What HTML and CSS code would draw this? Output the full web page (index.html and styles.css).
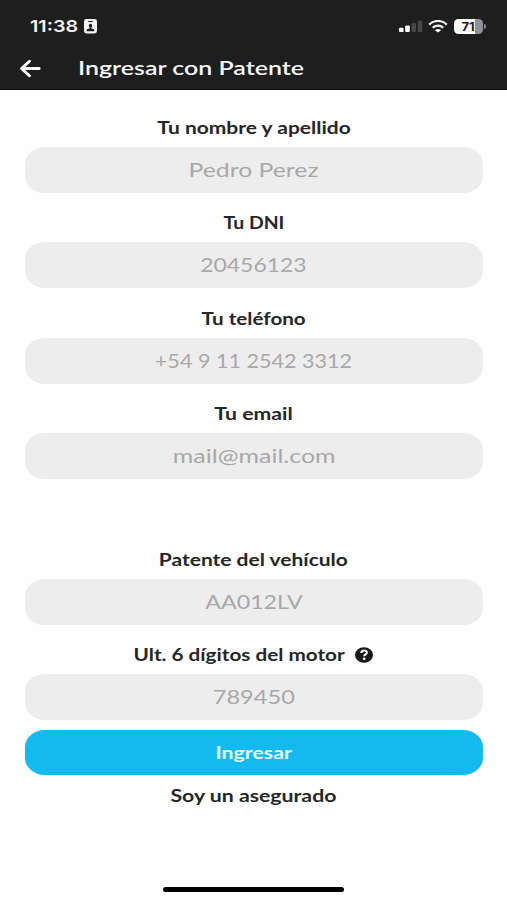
FILE: index.html
```html
<!DOCTYPE html>
<html lang="es">
<head>
<meta charset="utf-8">
<title>Ingresar con Patente</title>
<link rel="stylesheet" href="styles.css">
</head>
<body>
<header class="header">
  <div class="status">
    <span class="time wide">11:38</span>
    <svg class="id-badge" width="13" height="15" viewBox="0 0 13 15"><rect width="13" height="14.5" rx="2.4" fill="#f4f4f4"/><path d="M4.300 2.500h4.400" stroke="#1e1e1e" stroke-width="1.100"/><path d="M2.800 12.200v-1c0-1.200 1.300-1.400 2.900-1.600V8.300h1.600v1.300c1.600.2 2.900.4 2.900 1.600v1z" fill="#1e1e1e"/><ellipse cx="6.500" cy="6.700" rx="1.700" ry="2" fill="#1e1e1e"/></svg>
    <svg class="signal" width="24" height="13" viewBox="0 0 24 13"><rect x="0" y="7.800" width="4.600" height="4.200" rx="1" fill="#fff"/><rect x="6.200" y="5.500" width="4.600" height="6.500" rx="1" fill="#fff"/><rect x="12.600" y="3" width="4.400" height="9" rx="1" fill="#484848"/><rect x="18.800" y=".7" width="4.400" height="11.300" rx="1" fill="#484848"/></svg>
    <svg class="wifi" width="20" height="13" viewBox="0 0 20 13"><path d="M1.200 4.600C6-.2 14-.2 18.800 4.600M4.700 7.700c3-2.700 7.600-2.700 10.600 0" fill="none" stroke="#f6f6f6" stroke-width="2.200"/><path d="M10 12.600 6.900 10.200c1.700-1.500 4.500-1.500 6.200 0z" fill="#f6f6f6"/></svg>
    <div class="battery"><span class="level"><span class="percent wide">71</span></span><i class="cap"></i></div>
  </div>
  <div class="bar">
    <svg class="back" width="23" height="19" viewBox="0 0 23 19"><path d="M10.500 2.200 2.500 9.500l8 7.300M3 9.500h17.200" fill="none" stroke="#fff" stroke-width="2.900" stroke-linecap="round" stroke-linejoin="round"/></svg>
    <h1 class="title wide">Ingresar con Patente</h1>
  </div>
</header>
<main class="form">
  <div class="field name"><div class="label"><span class="wide">Tu nombre y apellido</span></div><div class="input"><span class="wide">Pedro Perez</span></div></div>
  <div class="field dni"><div class="label"><span class="wide">Tu DNI</span></div><div class="input"><span class="wide">20456123</span></div></div>
  <div class="field phone"><div class="label"><span class="wide">Tu teléfono</span></div><div class="input"><span class="wide">+54 9 11 2542 3312</span></div></div>
  <div class="field email"><div class="label"><span class="wide">Tu email</span></div><div class="input"><span class="wide">mail@mail.com</span></div></div>
  <div class="field vehicle"><div class="label"><span class="wide">Patente del vehículo</span></div><div class="input"><span class="wide">AA012LV</span></div></div>
  <div class="field motor"><div class="label"><span class="wide">Ult. 6 dígitos del motor</span><svg class="help" width="18" height="16" viewBox="0 0 18 16"><ellipse cx="9" cy="8" rx="9" ry="7.800" fill="#181818"/><path d="M6.200 6c.3-3.300 6-3.200 5.700-.3C11.700 7.400 9.200 7.300 9.200 9.300" fill="none" stroke="#fff" stroke-width="2.100"/><ellipse cx="9.200" cy="11.800" rx="1.400" ry="1.200" fill="#fff"/></svg></div><div class="input"><span class="wide">789450</span></div></div>
  <button class="submit"><span class="wide">Ingresar</span></button>
  <a class="link"><span class="wide">Soy un asegurado</span></a>
</main>
<div class="home"></div>
</body>
</html>
```
FILE: styles.css
```css
* { box-sizing: border-box; }
body { margin: 0; height: 900px; display: flex; flex-direction: column; background: #fefefe; color: #262626; font-family: Lato, sans-serif; overflow: hidden; }

/* Extended lettering */
.wide { display: inline-block; white-space: nowrap; transform: scaleX(var(--stretch, 1.27)); transform-origin: center; }

.header { height: 90px; background: #1e1e1e; color: #f5f5f5; border-bottom: 1px solid #111; }
.status { height: 50px; padding: 2px 21px 0 29.500px; display: flex; align-items: center; }
.time { --stretch: 1.23; width: 42px; font: 600 16px/20px Inter, sans-serif; transform-origin: left; margin-right: 12.500px; }
.signal { margin-left: auto; }
.wifi { margin-left: 5px; }
.battery { display: flex; align-items: center; margin-left: 6px; }
.level { width: 29px; height: 15px; border-radius: 4.500px; background: linear-gradient(90deg, #fff 21px, #929292 21px); color: #1e1e1e; font: 700 12px/15px Inter, sans-serif; text-align: center; }
.percent { --stretch: 1.1; }
.cap { width: 2px; height: 5px; margin-left: 1px; border-radius: 0 2px 2px 0; background: #888; }
.bar { height: 36px; padding-left: 18.500px; display: flex; align-items: center; }
.title { --stretch: 1.278; margin: 0 0 0 36.500px; font-size: 19.500px; line-height: 24px; font-weight: 600; transform-origin: left; }

.form { padding: 23px 24.500px 0 25px; flex: 1; }
.field { height: 95.400px; }
.label { height: 34px; padding-top: 4px; display: flex; justify-content: center; font-size: 16.500px; line-height: 22px; font-weight: 700; }
.input { height: 46px; padding-bottom: 2px; display: flex; align-items: center; justify-content: center; border-radius: 20px / 17px; background: #ededed; color: #a8a8a8; font-size: 20px; }

.name .label { --stretch: 1.272; }
.name .input { --stretch: 1.238; }
.dni .label { --stretch: 1.175; }
.dni .input { --stretch: 1.145; }
.phone .label { --stretch: 1.25; }
.phone .input { --stretch: 1.078; }
.email .label { --stretch: 1.285; }
.email .input { --stretch: 1.248; }
.vehicle { margin-top: 50px; }
.vehicle .label { --stretch: 1.272; }
.vehicle .input { --stretch: 1.16; }
.motor .label { --stretch: 1.255; gap: 31.500px; padding-left: 20.500px; }
.motor .input { --stretch: 1.18; }
.help { flex: none; margin-top: 3px; }

.submit { --stretch: 1.29; display: block; width: 100%; height: 45px; margin-top: -5px; padding: 0; border: 0; border-radius: 20px / 17px; background: #13baef; color: #e9faff; font: 700 16.500px/22px Lato, sans-serif; }
.link { --stretch: 1.288; display: flex; justify-content: center; margin-top: 10px; font-size: 16.500px; line-height: 22px; font-weight: 700; }
.home { width: 181px; height: 5px; margin: 0 auto 8px; border-radius: 3px; background: #000; }
```
